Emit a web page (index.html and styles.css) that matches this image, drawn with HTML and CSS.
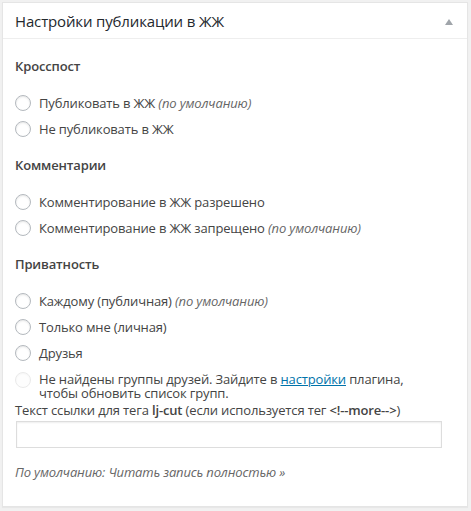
FILE: index.html
```html
<!DOCTYPE html>
<html lang="ru">
<head>
    <meta charset="UTF-8">
    <meta name="viewport" content="width=device-width, initial-scale=1.0">
    <title>Настройки публикации в ЖЖ</title>
    <link rel="stylesheet" href="styles.css">
</head>
<body>
    <div class="postbox">
        <div class="postbox-header">
            <h2 class="hndle">Настройки публикации в ЖЖ</h2>
            <!-- стрелка сворачивания -->
            <svg class="toggle-indicator" width="8" height="6" viewBox="0 0 8 6"><polygon points="4,0 8,6 0,6" fill="#a0a5aa"/></svg>
        </div>

        <div class="inside">
            <p class="group-title">Кросспост</p>
            <div class="radio-list">
                <label class="radio-row"><input type="radio" name="crosspost"> Публиковать в ЖЖ&nbsp;<i class="default">(по умолчанию)</i></label>
                <label class="radio-row"><input type="radio" name="crosspost"> Не публиковать в ЖЖ</label>
            </div>

            <p class="group-title">Комментарии</p>
            <div class="radio-list">
                <label class="radio-row"><input type="radio" name="comments"> Комментирование в ЖЖ разрешено</label>
                <label class="radio-row"><input type="radio" name="comments"> Комментирование в ЖЖ запрещено&nbsp;<i class="default">(по умолчанию)</i></label>
            </div>

            <p class="group-title">Приватность</p>
            <div class="radio-list radio-list-last">
                <label class="radio-row"><input type="radio" name="privacy"> Каждому (публичная)&nbsp;<i class="default">(по умолчанию)</i></label>
                <label class="radio-row"><input type="radio" name="privacy"> Только мне (личная)</label>
                <label class="radio-row"><input type="radio" name="privacy"> Друзья</label>
                <label class="radio-row radio-row-wrap">
                    <input type="radio" name="privacy" disabled>
                    <span class="wrap-text">Не найдены группы друзей. Зайдите в <a href="#">настройки</a> плагина, чтобы обновить список групп.</span>
                </label>
            </div>

            <p class="cut-label">Текст ссылки для тега <b>lj-cut</b> (если используется тег <b>&lt;!--more--&gt;</b>)</p>
            <input type="text" class="cut-input">
            <p class="description">По умолчанию: Читать запись полностью »</p>
        </div>
    </div>
</body>
</html>
```

FILE: styles.css
```css
html, body {
    margin: 0;
    background-color: #f1f1f1;
    font-family: "Open Sans", "Liberation Sans", sans-serif;
    font-size: 13px;
    color: #444;
}

/* блок настроек */
.postbox {
    width: 466px;
    box-sizing: border-box;
    margin: 2px;
    background-color: #fff;
    border: 1px solid #e5e5e5;
    box-shadow: 0 1px 1px rgba(0, 0, 0, 0.04);
}

.postbox-header {
    display: flex;
    align-items: center;
    justify-content: space-between;
    border-bottom: 1px solid #eee;
    padding-right: 14px;
}

.hndle {
    margin: 0;
    padding: 9px 12px 7px;
    font-size: 15px;
    font-weight: 400;
    line-height: 19px;
    letter-spacing: -0.15px;
    color: #23282d;
}

.toggle-indicator {
    display: block;
    margin-top: 2px;
}

.inside {
    padding: 0 12px 12px;
    letter-spacing: -0.15px;
}

.group-title {
    margin: 0;
    font-weight: 600;
    line-height: 20px;
}

.group-title:first-child {
    margin-top: 17px;
}

.radio-list {
    margin: 14px 0 13px;
}

.radio-list-last {
    margin-bottom: 0;
}

.radio-row {
    display: flex;
    align-items: center;
    height: 26px;
    line-height: 20px;
}

.radio-row input {
    -webkit-appearance: none;
    appearance: none;
    width: 16px;
    height: 16px;
    margin: 0 8px 0 0;
    flex-shrink: 0;
    border: 1px solid #b4b9be;
    border-radius: 50%;
    background-color: #fff;
    box-shadow: inset 0 1px 2px rgba(0, 0, 0, 0.1);
    box-sizing: border-box;
}

.radio-row input:disabled {
    border-color: #eaeaea;
    background-color: #fdfdfd;
    box-shadow: inset 0 1px 2px rgba(0, 0, 0, 0.03);
}

.radio-row-wrap {
    align-items: flex-start;
    height: auto;
    padding-top: 6px;
    line-height: 14px;
}

.wrap-text {
    max-width: 390px;
}

.wrap-text a {
    color: #0073aa;
}

.default {
    color: #666;
}

.cut-label {
    margin: 0;
    line-height: 20px;
}

.cut-label b {
    font-weight: 600;
}

.cut-input {
    display: block;
    width: 426px;
    height: 27px;
    box-sizing: border-box;
    margin: 1px 0 0 1px;
    border: 1px solid #ddd;
    box-shadow: inset 0 1px 2px rgba(0, 0, 0, 0.07);
    font-family: inherit;
}

.description {
    margin: 14px 0 12px;
    line-height: 20px;
    font-style: italic;
    color: #666;
}
```
